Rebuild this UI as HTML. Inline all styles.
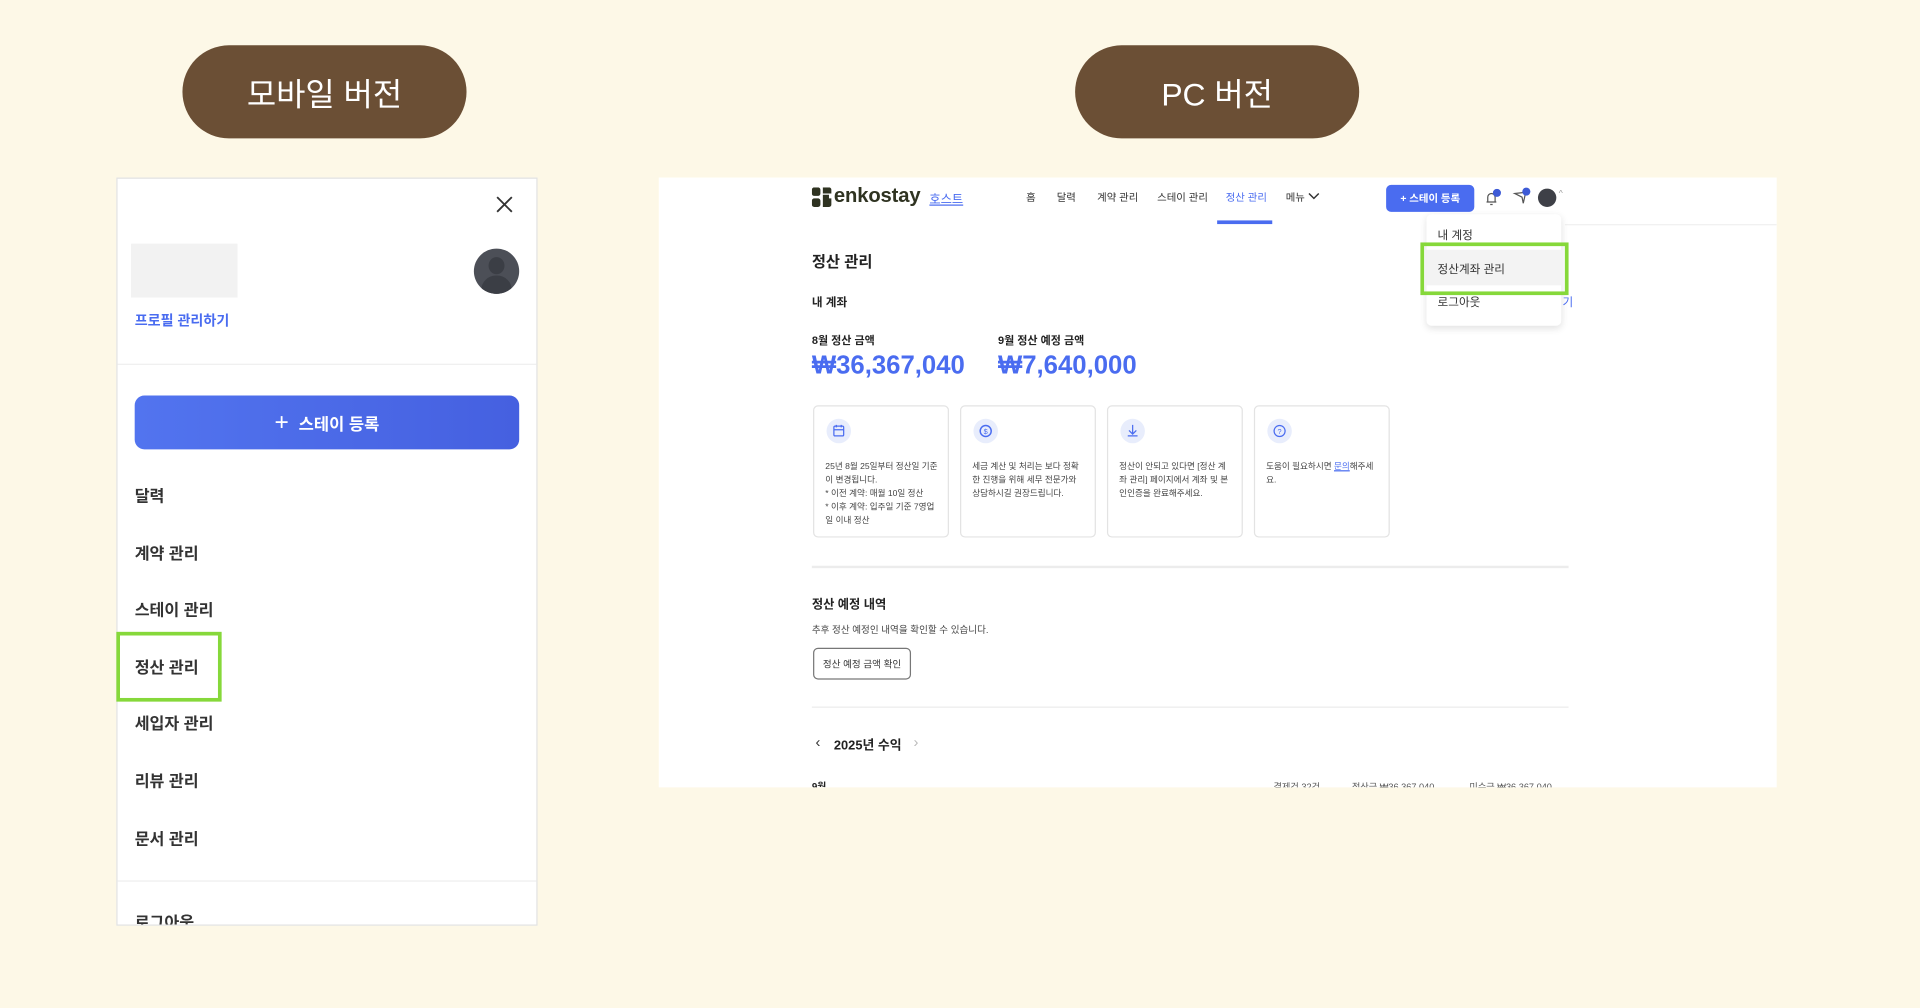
<!DOCTYPE html>
<html><head><meta charset="utf-8"><style>
html,body{margin:0;padding:0;width:1920px;height:1008px;overflow:hidden;background:#fdf8e7;}
*{box-sizing:border-box;}
#s{position:absolute;left:0;top:0;width:1568px;height:823px;transform:scale(1.22449);transform-origin:0 0;font-family:"Liberation Sans","Noto Sans CJK KR",sans-serif;color:#222;}
.a{position:absolute;white-space:nowrap;}
.pill{position:absolute;top:37px;width:232px;height:76px;border-radius:38px;background:#6b4f35;color:#fff;font-size:26px;display:flex;align-items:center;justify-content:center;}
.mi{position:absolute;left:110px;font-size:13.2px;font-weight:700;color:#333;transform:translateY(-50%);}
.nav{position:absolute;top:161px;transform:translateY(-50%);font-size:8.5px;color:#333;}
.card{position:absolute;top:331px;width:111px;height:108px;border:1px solid #e3e3e3;border-radius:4px;background:#fff;}
.card .ic{position:absolute;left:10px;top:10px;width:20px;height:20px;border-radius:50%;background:#e8edfc;}
.card .t{position:absolute;left:9px;top:44px;font-size:7px;line-height:11px;color:#444;white-space:normal;width:92px;}
</style></head><body><div id="s">
<div class="pill" style="left:149px">모바일 버전</div>
<div class="pill" style="left:878px">PC 버전</div>

<!-- mobile -->
<div class="a" style="left:95px;top:145px;width:344px;height:611px;background:#fff;border:1px solid #e2e2e2;overflow:hidden">
  <svg style="position:absolute;left:309px;top:14px" width="14" height="14" viewBox="0 0 14 14"><path d="M1 1L13 13M13 1L1 13" stroke="#333" stroke-width="1.5"/></svg>
  <div class="a" style="left:11px;top:53px;width:87px;height:44px;background:#f2f2f2"></div>
  <div class="a" style="left:291px;top:57px;width:37px;height:37px;border-radius:50%;background:#4c4f57;overflow:hidden">
    <div class="a" style="left:12px;top:7px;width:13px;height:14px;border-radius:50%;background:#3b3e45"></div>
    <div class="a" style="left:6px;top:22px;width:25px;height:20px;border-radius:12px 12px 0 0;background:#3b3e45"></div>
  </div>
  <div class="a" style="left:14px;top:108px;font-size:11.5px;font-weight:700;color:#4a6cf0">프로필 관리하기</div>
  <div class="a" style="left:0;top:151px;width:344px;height:1px;background:#eee"></div>
  <div class="a" style="left:14px;top:177px;width:314px;height:44px;border-radius:8px;background:linear-gradient(90deg,#5274ef,#4560e0);color:#fff;font-size:13.5px;font-weight:700;display:flex;align-items:center;justify-content:center"><span style="font-size:20px;font-weight:400;margin-right:8px">+</span>스테이 등록</div>
  <div class="a" style="left:0;top:573px;width:344px;height:1px;background:#eee"></div>
</div>
<div class="mi" style="top:404px">달력</div>
<div class="mi" style="top:451px">계약 관리</div>
<div class="mi" style="top:497px">스테이 관리</div>
<div class="mi" style="top:544px">정산 관리</div>
<div class="mi" style="top:590px">세입자 관리</div>
<div class="mi" style="top:637px">리뷰 관리</div>
<div class="mi" style="top:684px">문서 관리</div>
<div class="a" style="left:96px;top:743px;width:300px;height:12px;overflow:hidden"><div style="font-size:13.2px;font-weight:700;color:#333;margin-left:14px">로그아웃</div></div>
<div class="a" style="left:95px;top:516px;width:86px;height:57px;border:3.5px solid #86d83a"></div>

<!-- PC -->
<div class="a" style="left:538px;top:145px;width:913px;height:498px;background:#fff;overflow:hidden">
  <div class="a" style="left:740px;top:38px;width:173px;height:1px;background:#f0f0f0"></div>
</div>
<svg class="a" style="left:663px;top:153px" width="16" height="16" viewBox="0 0 16 16"><rect x="0" y="0" width="7" height="7" rx="2" fill="#2f3321"/><rect x="0" y="9" width="7" height="7" rx="2" fill="#2f3321"/><path d="M9 0h5a2 2 0 0 1 2 2v3h-7z M9 9h7v5a2 2 0 0 1-2 2h-5z M9 6h5v4h-5z" fill="#2f3321"/></svg>
<div class="a" style="left:681px;top:151px;font-size:16.5px;font-weight:700;color:#2f3321;letter-spacing:-0.1px">enkostay</div>
<div class="a" style="left:759px;top:154px;font-size:10px;color:#4a6cf0;text-decoration:underline">호스트</div>
<div class="nav" style="left:838px">홈</div>
<div class="nav" style="left:863px">달력</div>
<div class="nav" style="left:896px">계약 관리</div>
<div class="nav" style="left:945px">스테이 관리</div>
<div class="nav" style="left:1001px;color:#4a6cf0">정산 관리</div>
<div class="nav" style="left:1050px">메뉴</div>
<svg class="a" style="left:1068px;top:157px" width="10" height="7" viewBox="0 0 10 7"><path d="M1 1l4 4 4-4" stroke="#333" fill="none" stroke-width="1.2"/></svg>
<div class="a" style="left:994px;top:180px;width:45px;height:3px;background:#4a6cf0"></div>
<div class="a" style="left:1132px;top:151px;width:72px;height:22px;border-radius:4px;background:#4a6cf0;color:#fff;font-size:8.5px;font-weight:700;display:flex;align-items:center;justify-content:center">+ 스테이 등록</div>
<svg class="a" style="left:1211px;top:154px" width="16" height="14" viewBox="0 0 16 14"><path d="M3 11h8M4 11V7a3 3 0 0 1 6 0v4M6 13h2" stroke="#555" fill="none" stroke-width="1"/><circle cx="11.5" cy="3.5" r="3.3" fill="#3d5ad6"/></svg>
<svg class="a" style="left:1235px;top:153px" width="16" height="15" viewBox="0 0 16 15"><path d="M2 5l6 3 1 5 2-9z" stroke="#555" fill="none" stroke-width="1"/><circle cx="11.5" cy="3.5" r="3.3" fill="#3d5ad6"/></svg>
<div class="a" style="left:1256px;top:154px;width:15px;height:15px;border-radius:50%;background:#3e4047"></div>
<div class="a" style="left:1273px;top:155px;font-size:7px;color:#999">^</div>

<div class="a" style="left:1165px;top:175px;width:110px;height:91px;background:#fff;border-radius:4px;box-shadow:0 2px 6px rgba(0,0,0,.12)">
  <div class="a" style="left:9px;top:9px;font-size:9.5px;color:#333">내 계정</div>
  <div class="a" style="left:0;top:29px;width:110px;height:29px;background:#f3f3f3"></div>
  <div class="a" style="left:9px;top:37px;font-size:9.5px;color:#333">정산계좌 관리</div>
  <div class="a" style="left:9px;top:64px;font-size:9.5px;color:#333">로그아웃</div>
</div>
<div class="a" style="left:1160px;top:198px;width:121px;height:43px;border:3px solid #86d83a"></div>
<div class="a" style="left:1276px;top:239px;font-size:9.5px;color:#4a6cf0">기</div>

<div class="a" style="left:663px;top:203px;font-size:12.5px;font-weight:700">정산 관리</div>
<div class="a" style="left:663px;top:239px;font-size:9.5px;font-weight:700">내 계좌</div>
<div class="a" style="left:663px;top:271px;font-size:9px;font-weight:700">8월 정산 금액</div>
<div class="a" style="left:815px;top:271px;font-size:9px;font-weight:700">9월 정산 예정 금액</div>
<div class="a" style="left:663px;top:287px;font-size:21px;font-weight:700;color:#4a6cf0">₩36,367,040</div>
<div class="a" style="left:815px;top:287px;font-size:21px;font-weight:700;color:#4a6cf0">₩7,640,000</div>

<div class="card" style="left:664px"><div class="ic"><svg width="20" height="20" viewBox="0 0 20 20"><rect x="6" y="6" width="8" height="8" rx="1" stroke="#4a6cf0" fill="none" stroke-width="1"/><path d="M6 9h8M8 5v2M12 5v2" stroke="#4a6cf0" stroke-width="1"/></svg></div><div class="t">25년 8월 25일부터 정산일 기준이 변경됩니다.<br>* 이전 계약: 매월 10일 정산<br>* 이후 계약: 입주일 기준 7영업일 이내 정산</div></div>
<div class="card" style="left:784px"><div class="ic"><svg width="20" height="20" viewBox="0 0 20 20"><circle cx="10" cy="10" r="4.5" stroke="#4a6cf0" fill="none" stroke-width="1.2"/><text x="10" y="12.3" font-size="6" text-anchor="middle" fill="#4a6cf0" font-family="Liberation Sans">$</text></svg></div><div class="t">세금 계산 및 처리는 보다 정확한 진행을 위해 세무 전문가와 상담하시길 권장드립니다.</div></div>
<div class="card" style="left:904px"><div class="ic"><svg width="20" height="20" viewBox="0 0 20 20"><path d="M10 5v7M7 9.5l3 3 3-3M6 14h8" stroke="#4a6cf0" fill="none" stroke-width="1"/></svg></div><div class="t">정산이 안되고 있다면 [정산 계좌 관리] 페이지에서 계좌 및 본인인증을 완료해주세요.</div></div>
<div class="card" style="left:1024px"><div class="ic"><svg width="20" height="20" viewBox="0 0 20 20"><circle cx="10" cy="10" r="4.5" stroke="#4a6cf0" fill="none" stroke-width="1"/><text x="10" y="12.3" font-size="6" text-anchor="middle" fill="#4a6cf0" font-family="Liberation Sans">?</text></svg></div><div class="t">도움이 필요하시면 <span style="color:#4a6cf0;text-decoration:underline">문의</span>해주세요.</div></div>

<div class="a" style="left:663px;top:462px;width:618px;height:1.5px;background:#ececec"></div>
<div class="a" style="left:663px;top:485px;font-size:10px;font-weight:700">정산 예정 내역</div>
<div class="a" style="left:663px;top:509px;font-size:7.8px;color:#444">추후 정산 예정인 내역을 확인할 수 있습니다.</div>
<div class="a" style="left:664px;top:529px;width:80px;height:26px;border:1.3px solid #777;border-radius:4px;font-size:7.8px;color:#333;display:flex;align-items:center;justify-content:center">정산 예정 금액 확인</div>
<div class="a" style="left:663px;top:577px;width:618px;height:1px;background:#ececec"></div>
<div class="a" style="left:666px;top:599px;font-size:12px;color:#333">‹</div>
<div class="a" style="left:681px;top:601px;font-size:10.5px;font-weight:700">2025년 수익</div>
<div class="a" style="left:746px;top:599px;font-size:12px;color:#bbb">›</div>
<div class="a" style="left:538px;top:637px;width:913px;height:6px;overflow:hidden">
  <div class="a" style="left:125px;top:0;font-size:8px;font-weight:700">9월</div>
  <div class="a" style="left:502px;top:0;font-size:7.5px;color:#555">결제건 32건</div>
  <div class="a" style="left:566px;top:0;font-size:7.5px;color:#555">정산금 ₩36,367,040</div>
  <div class="a" style="left:662px;top:0;font-size:7.5px;color:#555">미수금 ₩36,367,040</div>
</div>
</div></body></html>
